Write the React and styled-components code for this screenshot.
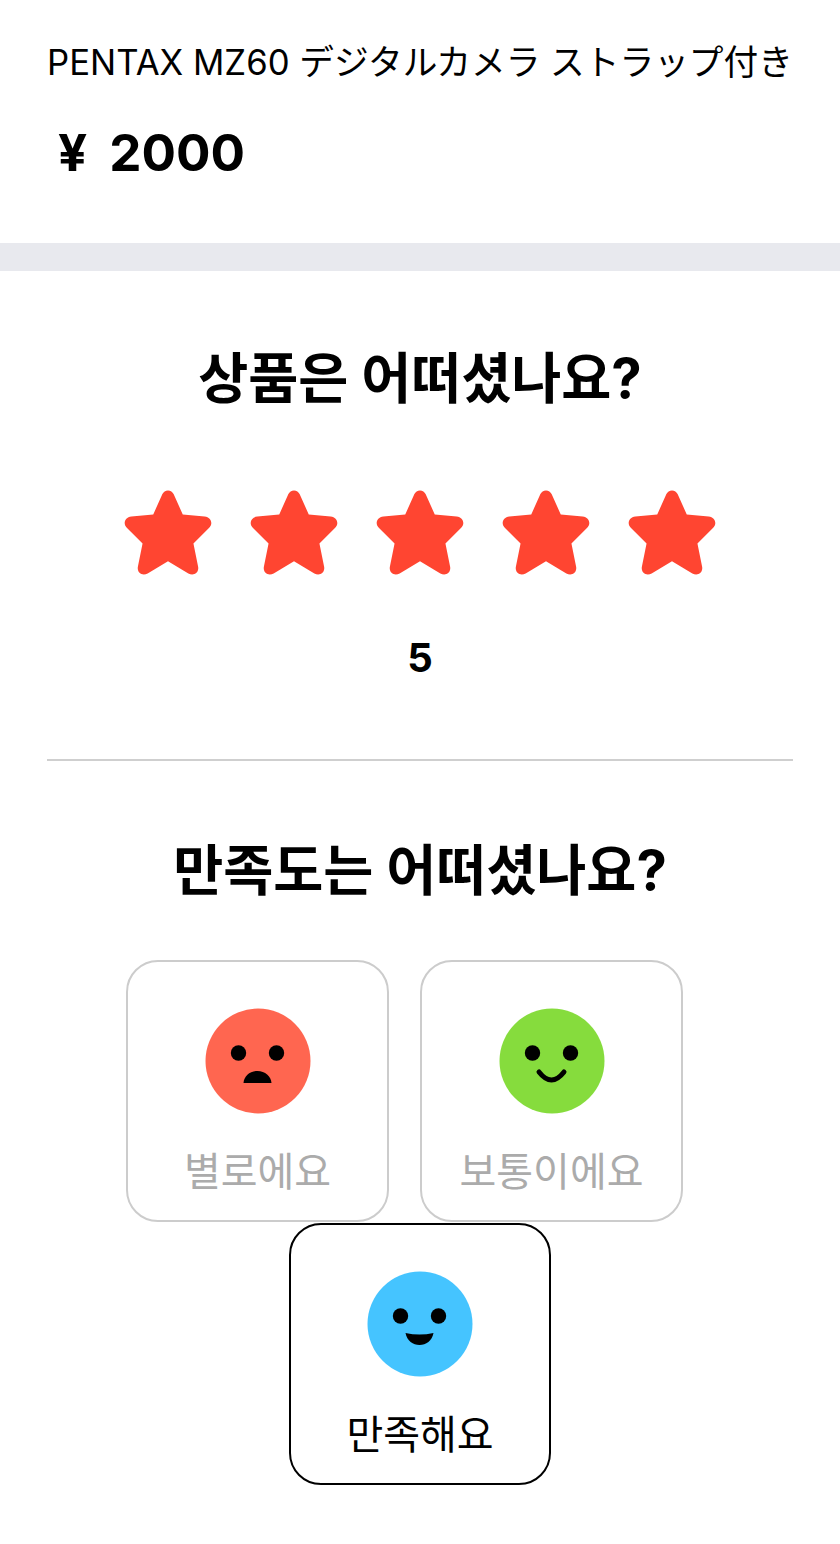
import React from "react"
import styled, { createGlobalStyle } from "styled-components"

const GlobalStyle = createGlobalStyle`
  html, body {
    margin: 0;
    padding: 0;
    background: #fff;
    color: #000;
    font-family: Inter, "Noto Sans CJK KR", "Noto Sans CJK JP", sans-serif;
  }
`

const Page = styled.div`
  width: 840px;
  height: 1544px;
  overflow: hidden;
  background: #fff;
`

const Product = styled.section`
  height: 243px;
  box-sizing: border-box;
  padding-top: 40px;
`

const ProductName = styled.div`
  font-family: Inter, "Noto Sans CJK JP", sans-serif;
  font-size: 34.7px;
  line-height: 44px;
  text-align: center;
  white-space: nowrap;
`

const Price = styled.div`
  margin: 43px 0 0 58px;
  font-size: 51.2px;
  line-height: 50px;
  font-weight: 700;
  display: flex;
  gap: 22px;
`

const Divider = styled.div`
  height: 28px;
  background: #e8e9ee;
`

const Section = styled.section`
  display: flex;
  flex-direction: column;
  align-items: center;
`

const Heading = styled.h2`
  margin: ${(p) => p.$top}px 0 0;
  font-size: 54.4px;
  line-height: 68px;
  font-weight: 700;
  font-family: Inter, "Noto Sans CJK KR", sans-serif;
`

const Stars = styled.div`
  margin-top: 77px;
  display: flex;
  gap: 36px;
`

const Score = styled.div`
  margin-top: 55px;
  font-size: 40px;
  line-height: 56px;
  font-weight: 700;
`

const Rule = styled.div`
  margin: 73px 47px 0;
  align-self: stretch;
  height: 2px;
  background: #cfcfcf;
`

const Cards = styled.div`
  margin-top: 56px;
  display: flex;
  flex-wrap: wrap;
  justify-content: center;
  row-gap: 1px;
  width: 100%;
`

const Card = styled.div`
  box-sizing: border-box;
  width: ${(p) => (p.$last ? 262 : 263)}px;
  height: 262px;
  margin-right: ${(p) => (p.$last ? 0 : 31)}px;
  padding-top: 46px;
  border: 2px solid ${(p) => (p.$selected ? "#000" : "#cccccc")};
  border-radius: 32px;
  display: flex;
  flex-direction: column;
  align-items: center;
`

const FaceCircle = styled.svg`
  display: block;
  width: 106px;
  height: 106px;
`

const CardLabel = styled.div`
  margin-top: 30px;
  font-size: 40px;
  line-height: 56px;
  color: ${(p) => (p.$selected ? "#000" : "#ababab")};
`

const Star = () => (
  <svg width="90" height="86" viewBox="1 0 88 84.500">
    <path
      d="M45 1.500 C47.500 1.500 49.500 3 50.500 5 L59.500 25 L81 27 C87.500 27.500 89.500 34.500 85.500 38 L70 53.500 L74.500 76 C76 82.500 70 86 65 83 L45 71 L25 83 C20 86 14 82.500 15.500 76 L20 53.500 L4.500 38 C0.500 34.500 2.500 27.500 9 27 L30.500 25 L39.500 5 C40.500 3 42.500 1.500 45 1.500 Z"
      fill="#ff4531"
    />
  </svg>
)

const mouths = {
  bad: <path d="M38.500 75 C39 68 45 63 52.500 63 C60 63 66 68 66.500 75 Z" fill="#000" />,
  normal: <path d="M40 64 Q52.500 80 65 64" fill="none" stroke="#000" strokeWidth="5" strokeLinecap="round" />,
  good: <path d="M38.500 62 Q52.500 65 66.500 62 C65 70 59 74 52.500 74 C46 74 40 70 38.500 62 Z" fill="#000" />,
}

const Face = ({ color, mood }) => (
  <FaceCircle viewBox="0 0 106 106">
    <circle cx="53" cy="53" r="52.500" fill={color} />
    <circle cx="33.500" cy="45" r="7.700" fill="#000" />
    <circle cx="71.500" cy="45" r="7.700" fill="#000" />
    {mouths[mood]}
  </FaceCircle>
)

const App = () => (
  <Page>
    <GlobalStyle />
    <Product>
      <ProductName>PENTAX MZ60 デジタルカメラ ストラップ付き</ProductName>
      <Price>
        <span>¥</span>
        <span>2000</span>
      </Price>
    </Product>
    <Divider />
    <Section>
      <Heading $top={73}>상품은 어떠셨나요?</Heading>
      <Stars>
        {[1, 2, 3, 4, 5].map((n) => (
          <Star key={n} />
        ))}
      </Stars>
      <Score>5</Score>
      <Rule />
      <Heading $top={75}>만족도는 어떠셨나요?</Heading>
      <Cards>
        <Card>
          <Face color="#ff6650" mood="bad" />
          <CardLabel>별로에요</CardLabel>
        </Card>
        <Card>
          <Face color="#86dc3d" mood="normal" />
          <CardLabel>보통이에요</CardLabel>
        </Card>
        <Card $selected $last>
          <Face color="#45c4ff" mood="good" />
          <CardLabel $selected>만족해요</CardLabel>
        </Card>
      </Cards>
    </Section>
  </Page>
)

export default App
